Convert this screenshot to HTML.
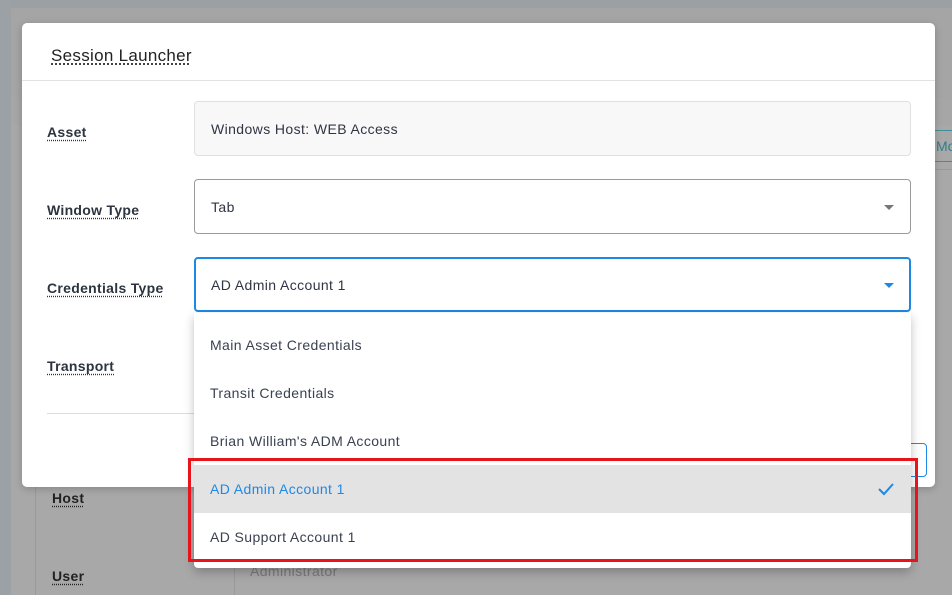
<!DOCTYPE html>
<html><head><meta charset="utf-8"><style>
*{margin:0;padding:0;box-sizing:border-box}
body{width:952px;height:595px;overflow:hidden;background:#a6a6a6;font-family:"Liberation Sans",sans-serif;position:relative;color:#2f3542}
.abs{position:absolute}
.lbl{position:absolute;left:47px;font-size:14px;font-weight:bold;color:#2c3440;text-decoration:underline dotted;text-underline-offset:3px;letter-spacing:0.3px}
.inp{position:absolute;left:194px;width:717px;height:55px;border-radius:4px;font-size:14px;padding-left:16px;display:flex;align-items:center;color:#2f3542;letter-spacing:0.4px}
.item{position:absolute;left:0;width:717px;height:48px;padding-left:16px;display:flex;align-items:center;font-size:14px;color:#3a4150;letter-spacing:0.4px}
</style></head><body>
<div class="abs" style="left:0;top:0;width:952px;height:8px;background:#9aa0a4"></div>
<div class="abs" style="left:0;top:0;width:11px;height:595px;background:#9ca1a5"></div>
<div class="abs" style="left:11px;top:8px;width:941px;height:90px;background:#a5a5a5;border-radius:4px"></div>
<div class="abs" style="left:11px;top:125px;width:941px;height:470px;background:#a8a8a8"></div>
<div class="abs" style="left:35px;top:487px;width:1px;height:108px;background:#999"></div>
<div class="abs" style="left:234px;top:487px;width:1px;height:108px;background:#999"></div>
<div class="abs lbl" style="left:52px;top:490px;color:#222">Host</div>
<div class="abs lbl" style="left:52px;top:568px;color:#222">User</div>
<div class="abs" style="left:250px;top:563px;font-size:14px;color:#7a7a7a;letter-spacing:0.4px">Administrator</div>
<div class="abs" style="left:935px;top:130px;width:17px;height:32px;border-top:1px solid #3e8f99;border-bottom:1px solid #3e8f99"></div>
<div class="abs" style="left:936px;top:138px;font-size:14px;color:#2d7f8a">Mo</div>
<div class="abs" style="left:935px;top:169px;width:17px;height:1px;background:#999"></div>

<div class="abs" style="left:22px;top:23px;width:913px;height:464px;background:#fff;border-radius:5px;box-shadow:0 2px 8px rgba(0,0,0,.2)">
<div class="abs" style="left:29px;top:23px;font-size:17px;color:#222;text-decoration:underline dotted;text-underline-offset:3px;letter-spacing:0.3px">Session Launcher</div>
<div class="abs" style="left:0;top:57px;width:913px;height:1px;background:#e2e2e2"></div>
<div class="abs" style="left:25px;top:390px;width:160px;height:1px;background:#ddd"></div>
<div class="abs" style="left:858px;top:420px;width:47px;height:34px;border:1px solid #1e88e5;border-radius:4px"></div>
</div>

<div class="lbl" style="top:124px">Asset</div>
<div class="lbl" style="top:202px">Window Type</div>
<div class="lbl" style="top:280px">Credentials Type</div>
<div class="lbl" style="top:358px">Transport</div>

<div class="inp" style="top:101px;background:#f8f8f8;border:1px solid #e0e0e0">Windows Host: WEB Access</div>
<div class="inp" style="top:179px;border:1px solid #9a9a9a">Tab
<div class="abs" style="right:16px;top:25px;border-left:5px solid transparent;border-right:5px solid transparent;border-top:5px solid #777"></div></div>
<div class="inp" style="top:257px;border:2px solid #1e88e5;padding-left:15px">AD Admin Account 1
<div class="abs" style="right:15px;top:24px;border-left:5px solid transparent;border-right:5px solid transparent;border-top:5px solid #1e88e5"></div></div>

<div class="abs" style="left:194px;top:313px;width:717px;height:255px;background:#fff;border-radius:0 0 4px 4px;box-shadow:0 4px 10px rgba(0,0,0,.25)">
<div class="item" style="top:8px">Main Asset Credentials</div>
<div class="item" style="top:56px">Transit Credentials</div>
<div class="item" style="top:104px">Brian William's ADM Account</div>
<div class="item" style="top:152px;background:#e3e3e3;color:#1e88e5">AD Admin Account 1
<svg class="abs" style="right:16px;top:16px" width="18" height="16" viewBox="0 0 18 16"><path d="M2 8 L7 13 L16 3" fill="none" stroke="#1e88e5" stroke-width="2"/></svg></div>
<div class="item" style="top:200px">AD Support Account 1</div>
</div>
<div class="abs" style="left:188px;top:458px;width:730px;height:104px;border:3px solid #e8141c"></div>
</body></html>
